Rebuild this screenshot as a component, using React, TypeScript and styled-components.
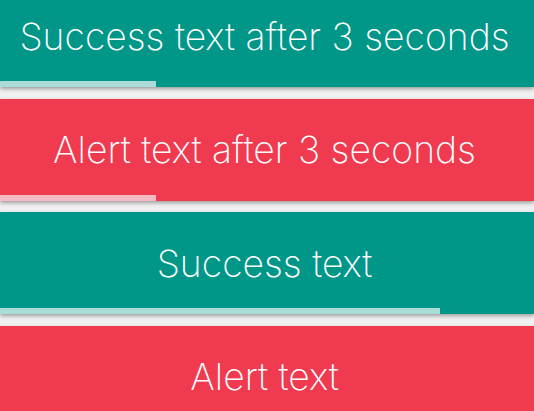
import React from "react";
import styled, { createGlobalStyle } from "styled-components";

const Global = createGlobalStyle`
  html, body { margin: 0; padding: 0; background: #f1f1f1; overflow: hidden; }
  body { font-family: Inter, "Noto Sans", sans-serif; }
`;

const List = styled.div`
  display: flex;
  flex-direction: column;
  gap: 11.5px;
  margin-top: -15px;
`;

const Toast = styled.div<{ $kind: "success" | "alert" }>`
  height: 102px;
  display: flex;
  flex-direction: column;
  background: ${(p) => (p.$kind === "success" ? "#009688" : "#f03a50")};
  box-shadow: 0 2px 4px rgba(0, 0, 0, 0.35);
  color: #fff;
`;

const Message = styled.div`
  flex: 1;
  display: flex;
  align-items: center;
  justify-content: center;
  font-size: 37.3px;
  font-weight: 250;
  padding: 6px 5px 0 0;
  white-space: nowrap;
`;

const Track = styled.div`
  height: 6px;
  display: flex;
`;

const Bar = styled.div<{ $kind: "success" | "alert" }>`
  height: 100%;
  background: ${(p) => (p.$kind === "success" ? "#a9dbd7" : "#f4b9c2")};
`;

type Item = { kind: "success" | "alert"; text: string; progress: number | null };

const items: Item[] = [
  { kind: "success", text: "Success text after 3 seconds", progress: 156 },
  { kind: "alert", text: "Alert text after 3 seconds", progress: 156 },
  { kind: "success", text: "Success text", progress: 440 },
  { kind: "alert", text: "Alert text", progress: null },
];

export default function App() {
  return (
    <>
      <Global />
      <List>
        {items.map((it, i) => (
          <Toast key={i} $kind={it.kind}>
            <Message>{it.text}</Message>
            <Track>
              {it.progress !== null && (
                <Bar $kind={it.kind} style={{ width: it.progress }} />
              )}
            </Track>
          </Toast>
        ))}
      </List>
    </>
  );
}
